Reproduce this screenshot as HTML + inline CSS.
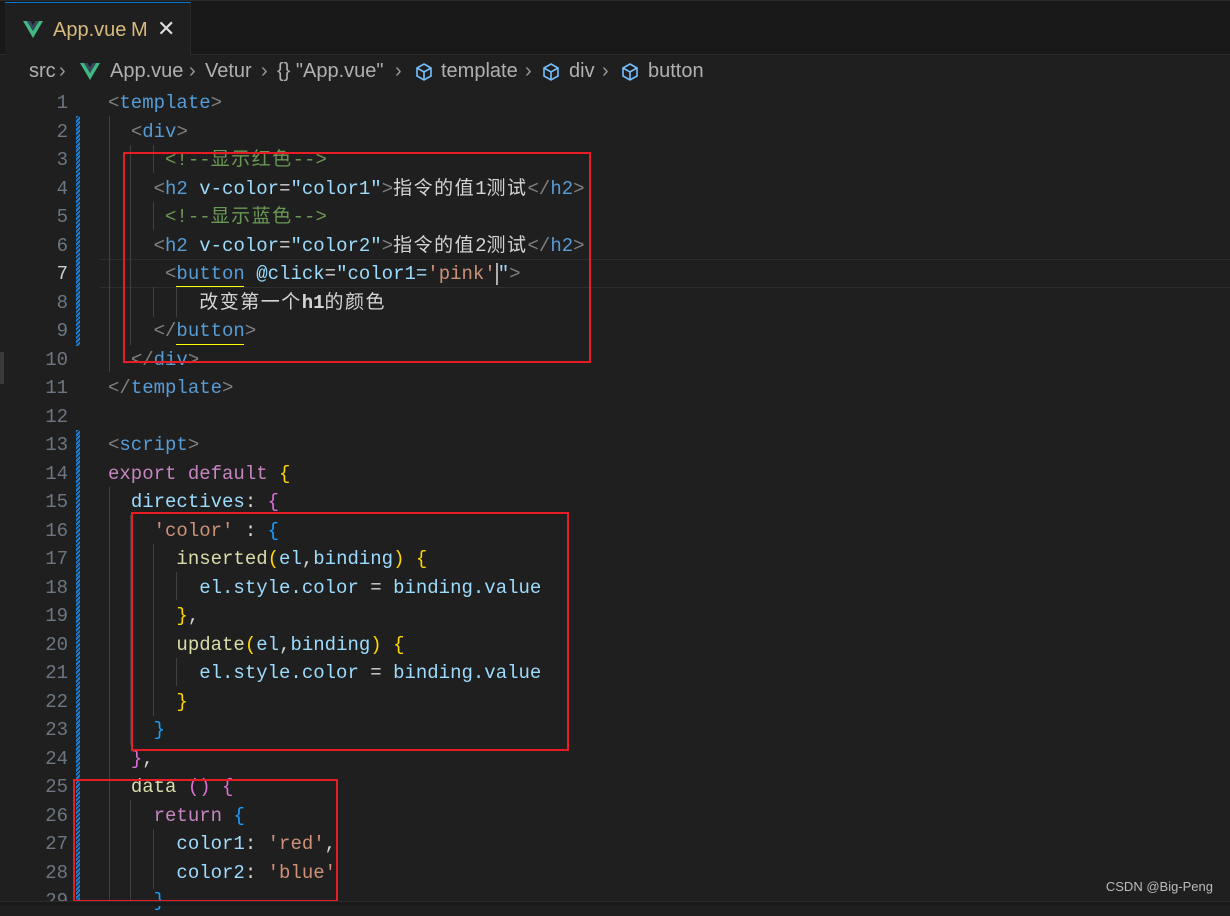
<!DOCTYPE html>
<html><head><meta charset="utf-8"><style>
*{margin:0;padding:0;box-sizing:border-box}
body{width:1230px;height:906px;background:#1f1f1f;overflow:hidden;position:relative;font-family:"Liberation Sans","Noto Sans CJK SC",sans-serif}
.tabbar{position:absolute;left:0;top:0;width:1230px;height:55px;background:#181818;border-top:1px solid #2b2b2b;border-bottom:1px solid #2b2b2b}
.tab{position:absolute;left:5px;top:2px;width:186px;height:53px;background:#1f1f1f;border-top:1px solid #0078d4;border-right:1px solid #2b2b2b}
.tab .t{position:absolute;left:48px;top:16px;font-size:20px;color:#d7ba7d}
.tab .m{position:absolute;left:126px;top:16px;font-size:20px;color:#d7ba7d}
.tab .x{position:absolute;left:152px;top:13px;font-size:22px;color:#ddd}
.bi{position:absolute;top:60px;font-size:20px;color:#b0b0b0;white-space:nowrap}
.sep{color:#999}
.ln{position:absolute;left:0;width:68px;text-align:right;font-family:"Liberation Mono",monospace;font-size:19px;color:#6e7681;height:28.5px;line-height:30px}
.cl{position:absolute;left:108px;font-family:"Liberation Mono","Noto Sans CJK SC",monospace;font-size:19px;height:28.5px;line-height:30px;white-space:pre;color:#cccccc}
.cj{letter-spacing:1.5px}
.g{position:absolute;width:1px;background:#404040}
.t1{color:#808080}.tg{color:#569cd6}.at{color:#9cdcfe}.st{color:#ce9178}.cm{color:#6a9955}.kw{color:#c586c0}.fn{color:#dcdcaa}.va{color:#9cdcfe}.y{color:#ffd700}.p{color:#da70d6}.b{color:#179fff}.w{color:#d4d4d4}
.rb{position:absolute;border:2.5px solid #e81c24}
.mod{position:absolute;left:76px;width:4px;background:repeating-linear-gradient(135deg,#1b81d8 0 2px,#1f1f1f 2px 3px)}
</style></head><body>
<div class="tabbar"></div>
<div class="tab">
<svg style="position:absolute;left:18px;top:18px" width="20" height="17" viewBox="0 0 20 17"><path d="M0 0h4l6 10 6-10h4L10 17z" fill="#41b883"/><path d="M4 0h3.5L10 4.5 12.5 0H16l-6 10z" fill="#35495e"/></svg>
<span class="t">App.vue</span><span class="m">M</span><span class="x">✕</span></div>

<span class="bi" style="left:29px">src</span><span class="bi sep" style="left:59px">›</span>
<svg style="position:absolute;left:80px;top:63px" width="20" height="17" viewBox="0 0 20 17"><path d="M0 0h4l6 10 6-10h4L10 17z" fill="#41b883"/><path d="M4 0h3.5L10 4.5 12.5 0H16l-6 10z" fill="#35495e"/></svg>
<span class="bi" style="left:110px">App.vue</span><span class="bi sep" style="left:189px">›</span>
<span class="bi" style="left:205px">Vetur</span><span class="bi sep" style="left:261px">›</span>
<span class="bi" style="left:277px">{} "App.vue"</span><span class="bi sep" style="left:395px">›</span>
<svg style="position:absolute;left:414px;top:62px" width="20" height="20" viewBox="0 0 20 20"><path d="M10 2l7 4v8l-7 4-7-4V6zM3 6l7 4 7-4M10 10v8" fill="none" stroke="#75beff" stroke-width="1.6"/></svg>
<span class="bi" style="left:441px">template</span><span class="bi sep" style="left:525px">›</span>
<svg style="position:absolute;left:541px;top:62px" width="20" height="20" viewBox="0 0 20 20"><path d="M10 2l7 4v8l-7 4-7-4V6zM3 6l7 4 7-4M10 10v8" fill="none" stroke="#75beff" stroke-width="1.6"/></svg>
<span class="bi" style="left:569px">div</span><span class="bi sep" style="left:602px">›</span>
<svg style="position:absolute;left:620px;top:62px" width="20" height="20" viewBox="0 0 20 20"><path d="M10 2l7 4v8l-7 4-7-4V6zM3 6l7 4 7-4M10 10v8" fill="none" stroke="#75beff" stroke-width="1.6"/></svg>
<span class="bi" style="left:648px">button</span>

<div style="position:absolute;left:0;top:352px;width:4px;height:32px;background:#3a3a3a"></div>
<div style="position:absolute;left:100px;top:259px;width:1130px;height:29px;border-top:1px solid #2e2e2e;border-bottom:1px solid #2e2e2e"></div>
<div class="mod" style="top:116px;height:230px"></div>
<div class="mod" style="top:430px;height:476px"></div>

<div class="g" style="left:109px;top:116px;height:256px"></div>
<div class="g" style="left:130px;top:145px;height:200px"></div>
<div class="g" style="left:153px;top:145px;height:28px"></div>
<div class="g" style="left:153px;top:202px;height:28px"></div>
<div class="g" style="left:153px;top:287px;height:30px"></div>
<div class="g" style="left:176px;top:287px;height:30px"></div>
<div class="g" style="left:109px;top:487px;height:419px"></div>
<div class="g" style="left:130px;top:515px;height:230px"></div>
<div class="g" style="left:153px;top:544px;height:172px"></div>
<div class="g" style="left:176px;top:572px;height:28px"></div>
<div class="g" style="left:176px;top:658px;height:28px"></div>
<div class="g" style="left:130px;top:800px;height:106px"></div>
<div class="g" style="left:153px;top:829px;height:60px"></div>
<div style="position:absolute;left:176px;top:286px;width:68px;height:1px;background:#ffff00"></div>
<div style="position:absolute;left:176px;top:344px;width:68px;height:1px;background:#ffff00"></div>

<div class="ln" style="top:88px">1</div><div class="cl" style="top:88px"><span class="t1">&lt;</span><span class="tg">template</span><span class="t1">&gt;</span></div>
<div class="ln" style="top:116.5px">2</div><div class="cl" style="top:116.5px">  <span class="t1">&lt;</span><span class="tg">div</span><span class="t1">&gt;</span></div>
<div class="ln" style="top:145px">3</div><div class="cl" style="top:145px">     <span class="cm">&lt;!--<span class="cj">显示红色</span>--&gt;</span></div>
<div class="ln" style="top:173.5px">4</div><div class="cl" style="top:173.5px">    <span class="t1">&lt;</span><span class="tg">h2</span> <span class="at">v-color</span><span class="w">=</span><span class="va">"color1"</span><span class="t1">&gt;</span><span class="w cj">指令的值</span><span class="w">1</span><span class="w cj">测试</span><span class="t1">&lt;/</span><span class="tg">h2</span><span class="t1">&gt;</span></div>
<div class="ln" style="top:202px">5</div><div class="cl" style="top:202px">     <span class="cm">&lt;!--<span class="cj">显示蓝色</span>--&gt;</span></div>
<div class="ln" style="top:230.5px">6</div><div class="cl" style="top:230.5px">    <span class="t1">&lt;</span><span class="tg">h2</span> <span class="at">v-color</span><span class="w">=</span><span class="va">"color2"</span><span class="t1">&gt;</span><span class="w cj">指令的值</span><span class="w">2</span><span class="w cj">测试</span><span class="t1">&lt;/</span><span class="tg">h2</span><span class="t1">&gt;</span></div>
<div class="ln" style="top:259px;color:#ccc">7</div><div class="cl" style="top:259px">     <span class="t1">&lt;</span><span class="tg">button</span> <span class="at">@click</span><span class="w">=</span><span class="va">"color1=</span><span class="st">'pink'</span><span style="border-left:2px solid #aeafad"></span><span class="va">"</span><span class="t1">&gt;</span></div>
<div class="ln" style="top:287.5px">8</div><div class="cl" style="top:287.5px">        <span class="w cj">改变第一个</span><span class="w" style="font-weight:bold">h1</span><span class="w cj">的颜色</span></div>
<div class="ln" style="top:316px">9</div><div class="cl" style="top:316px">    <span class="t1">&lt;/</span><span class="tg">button</span><span class="t1">&gt;</span></div>
<div class="ln" style="top:344.5px">10</div><div class="cl" style="top:344.5px">  <span class="t1">&lt;/</span><span class="tg">div</span><span class="t1">&gt;</span></div>
<div class="ln" style="top:373px">11</div><div class="cl" style="top:373px"><span class="t1">&lt;/</span><span class="tg">template</span><span class="t1">&gt;</span></div>
<div class="ln" style="top:401.5px">12</div>
<div class="ln" style="top:430px">13</div><div class="cl" style="top:430px"><span class="t1">&lt;</span><span class="tg">script</span><span class="t1">&gt;</span></div>
<div class="ln" style="top:458.5px">14</div><div class="cl" style="top:458.5px"><span class="kw">export default</span> <span class="y">{</span></div>
<div class="ln" style="top:487px">15</div><div class="cl" style="top:487px">  <span class="va">directives</span><span class="w">:</span> <span class="p">{</span></div>
<div class="ln" style="top:515.5px">16</div><div class="cl" style="top:515.5px">    <span class="st">'color'</span> <span class="w">:</span> <span class="b">{</span></div>
<div class="ln" style="top:544px">17</div><div class="cl" style="top:544px">      <span class="fn">inserted</span><span class="y">(</span><span class="va">el</span><span class="w">,</span><span class="va">binding</span><span class="y">)</span> <span class="y">{</span></div>
<div class="ln" style="top:572.5px">18</div><div class="cl" style="top:572.5px">        <span class="va">el.style.color</span> <span class="w">=</span> <span class="va">binding.value</span></div>
<div class="ln" style="top:601px">19</div><div class="cl" style="top:601px">      <span class="y">}</span><span class="w">,</span></div>
<div class="ln" style="top:629.5px">20</div><div class="cl" style="top:629.5px">      <span class="fn">update</span><span class="y">(</span><span class="va">el</span><span class="w">,</span><span class="va">binding</span><span class="y">)</span> <span class="y">{</span></div>
<div class="ln" style="top:658px">21</div><div class="cl" style="top:658px">        <span class="va">el.style.color</span> <span class="w">=</span> <span class="va">binding.value</span></div>
<div class="ln" style="top:686.5px">22</div><div class="cl" style="top:686.5px">      <span class="y">}</span></div>
<div class="ln" style="top:715px">23</div><div class="cl" style="top:715px">    <span class="b">}</span></div>
<div class="ln" style="top:743.5px">24</div><div class="cl" style="top:743.5px">  <span class="p">}</span><span class="w">,</span></div>
<div class="ln" style="top:772px">25</div><div class="cl" style="top:772px">  <span class="fn">data</span> <span class="p">()</span> <span class="p">{</span></div>
<div class="ln" style="top:800.5px">26</div><div class="cl" style="top:800.5px">    <span class="kw">return</span> <span class="b">{</span></div>
<div class="ln" style="top:829px">27</div><div class="cl" style="top:829px">      <span class="va">color1</span><span class="w">:</span> <span class="st">'red'</span><span class="w">,</span></div>
<div class="ln" style="top:857.5px">28</div><div class="cl" style="top:857.5px">      <span class="va">color2</span><span class="w">:</span> <span class="st">'blue'</span></div>
<div class="ln" style="top:886px">29</div><div class="cl" style="top:886px">    <span class="b">}</span></div>

<div class="rb" style="left:123px;top:152px;width:468px;height:211px"></div>
<div class="rb" style="left:131px;top:512px;width:438px;height:239px"></div>
<div class="rb" style="left:73px;top:779px;width:265px;height:123px"></div>
<div style="position:absolute;left:0;top:901px;width:1230px;height:5px;background:#1a1a1a;border-top:1px solid #2b2b2b"></div>
<div style="position:absolute;right:17px;top:879px;font-size:13px;color:#bbb;font-family:'Liberation Sans',sans-serif">CSDN @Big-Peng</div>
</body></html>
